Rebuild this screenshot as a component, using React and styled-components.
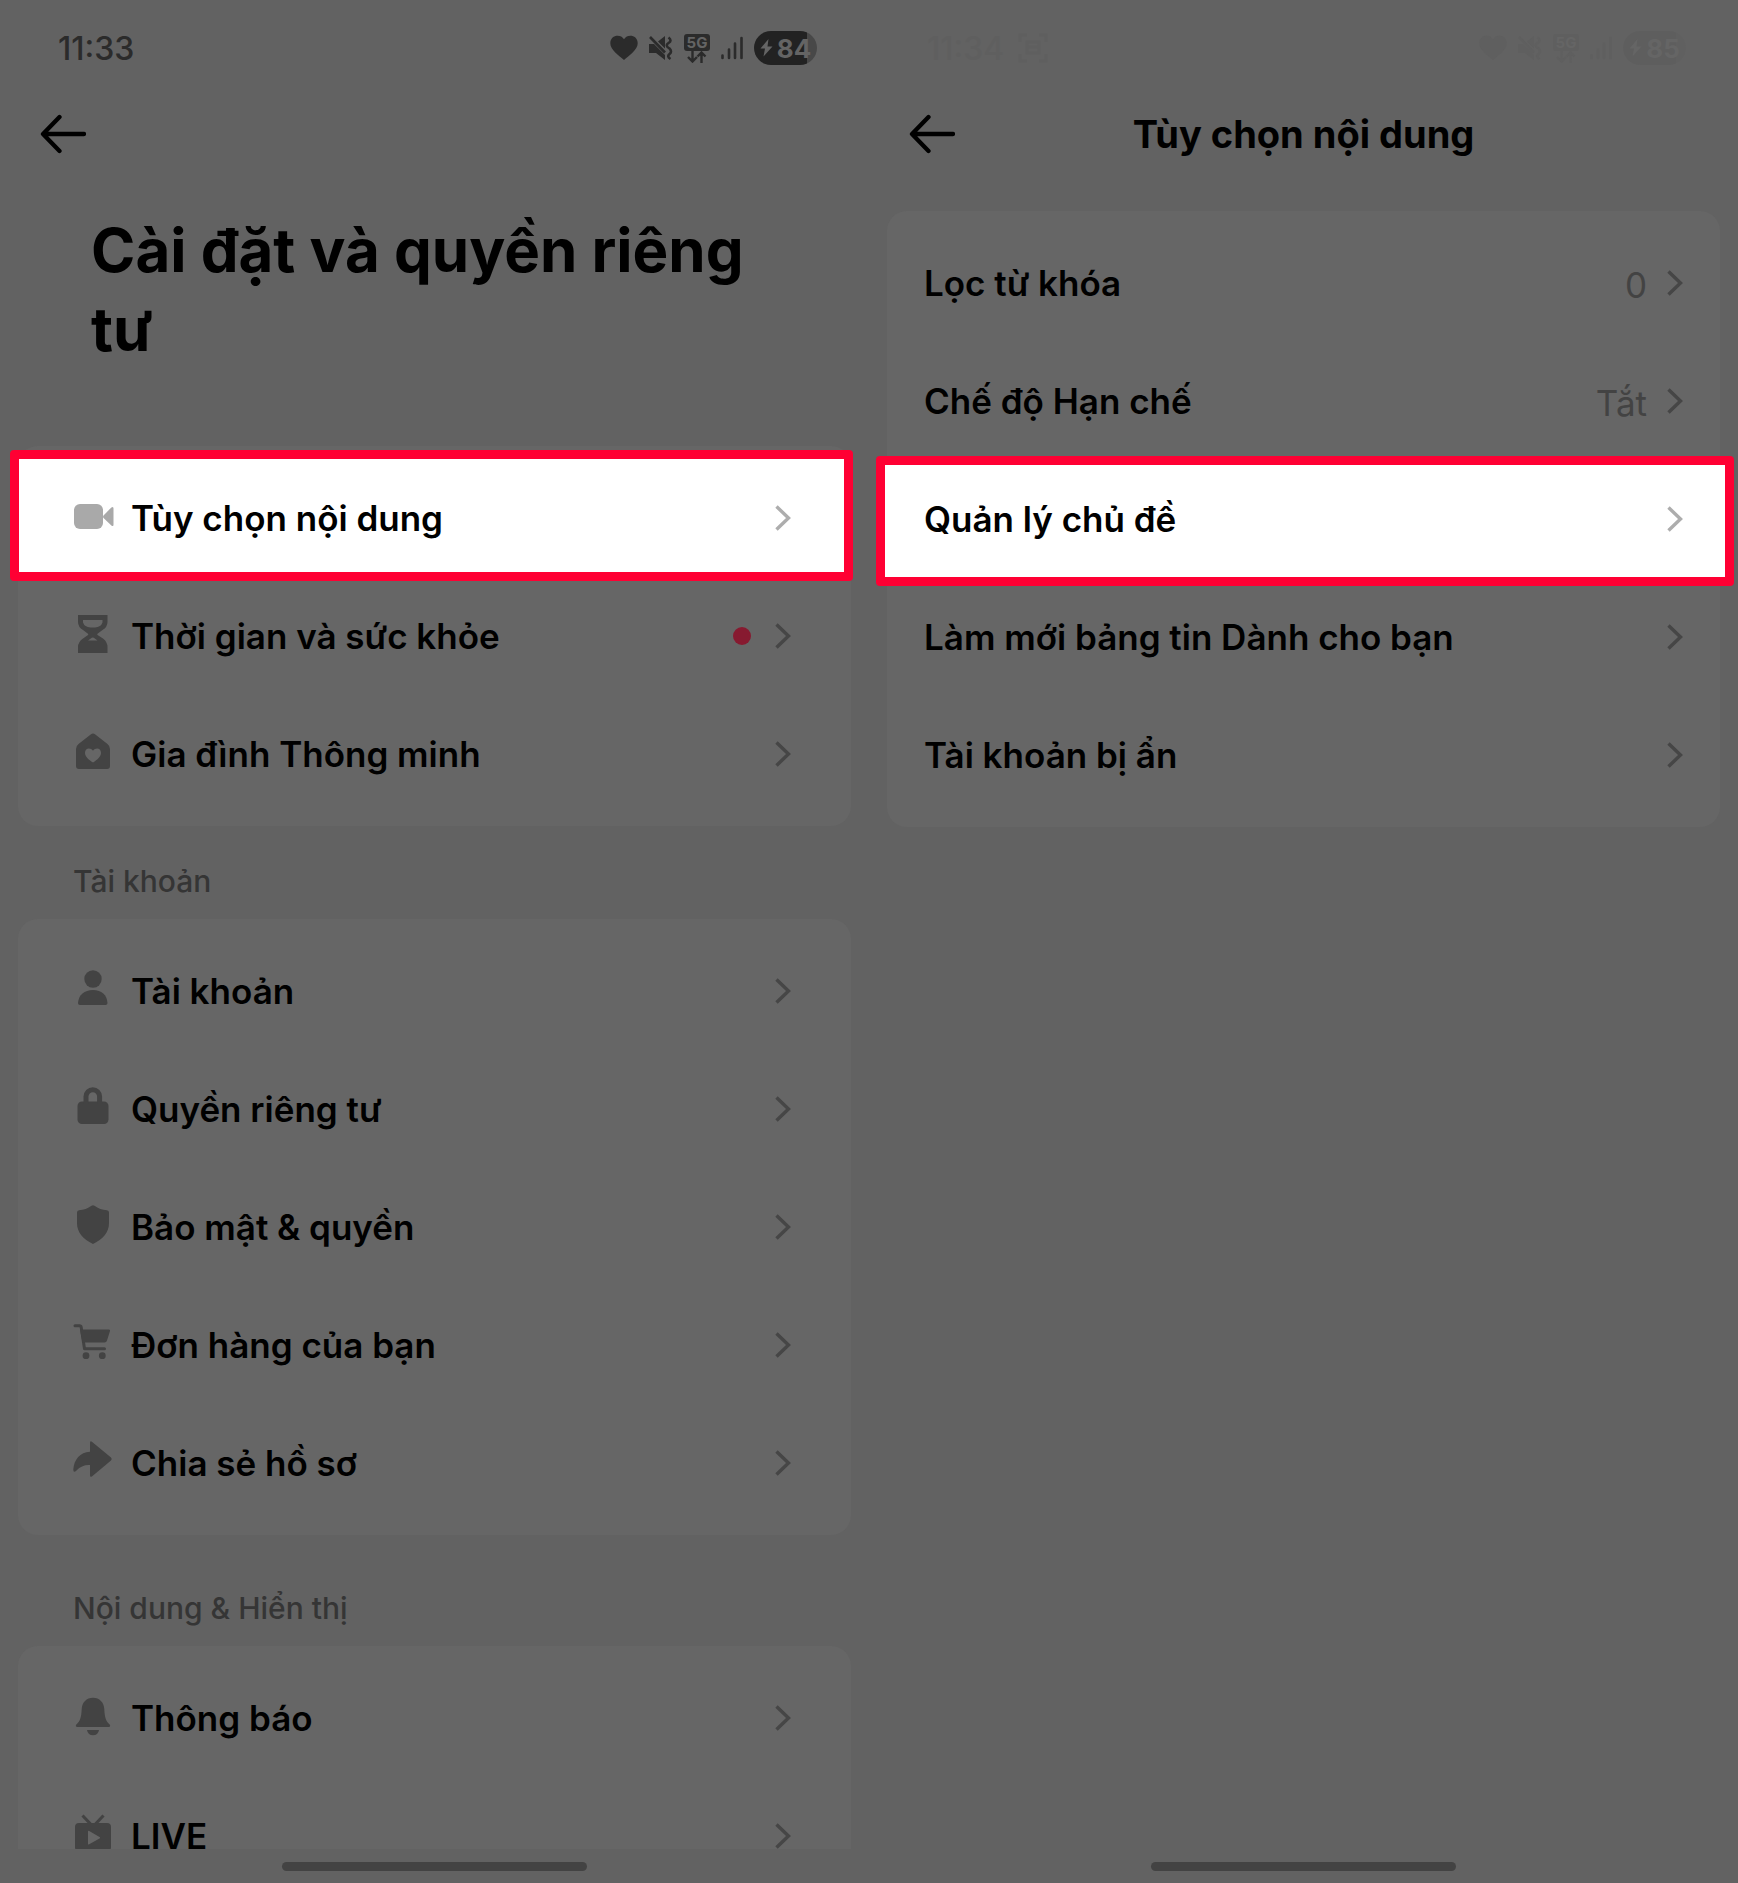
import styled, { createGlobalStyle } from "styled-components";

const accountItems = [
  { icon: "user", label: "Tài khoản" },
  { icon: "lock", label: "Quyền riêng tư" },
  { icon: "shield", label: "Bảo mật & quyền" },
  { icon: "cart", label: "Đơn hàng của bạn" },
  { icon: "share", label: "Chia sẻ hồ sơ" },
];

const generalItems = [
  { icon: "video", label: "Tùy chọn nội dung", frame: "-9px -2px -4px -8px" },
  { icon: "hourglass", label: "Thời gian và sức khỏe", dot: true },
  { icon: "house", label: "Gia đình Thông minh" },
];

const displayItems = [
  { icon: "bell", label: "Thông báo" },
  { icon: "live", label: "LIVE" },
];

const contentItems = [
  { label: "Lọc từ khóa", value: "0" },
  { label: "Chế độ Hạn chế", value: "Tắt" },
  { label: "Quản lý chủ đề", frame: "-4px -14px -8px -11px" },
  { label: "Làm mới bảng tin Dành cho bạn" },
  { label: "Tài khoản bị ẩn" },
];

const icons = {
  video: (
    <>
      <rect x="1" y="8" width="29" height="25" rx="6" />
      <path d="M30.5 19.5 38.4 11.4Q40.5 10 40.5 12.5V28.5Q40.5 31 38.4 29.4L30.5 22Q29.6 20.7 30.5 19.5Z" />
    </>
  ),
  hourglass: (
    <path
      fillRule="evenodd"
      d="M5 1H34.5V8Q34.5 13 29.5 16L24.5 19.7Q24 20.3 24.5 21L30 24.5Q34.5 28 34.5 33V39H5V33Q5 28 10 24.5L15 21Q15.6 20.3 15 19.7L10 16Q5 13 5 8ZM10 6V8.5Q11.5 13 17.5 13.5H22Q28 13 29.5 8.5V6ZM15 26.5H24.5L20.8 23.8Q19.8 23.2 18.8 23.8Z"
    />
  ),
  house: (
    <path
      fillRule="evenodd"
      d="M18 2.3Q20 .7 22 2.3L34.5 12Q37 14 37 17V34Q37 37 34 37H6Q3 37 3 34V17Q3 14 5.500 12ZM20 30.5C15.5 27.5 12 24.5 12 20.7C12 16 17.5 15 20 18.8C22.5 15 28 16 28 20.7C28 24.5 24.5 27.5 20 30.5Z"
    />
  ),
  user: (
    <>
      <circle cx="20" cy="10" r="8.7" />
      <path d="M5 34C5.5 26 11.5 21 20 21S34 26 34.5 34Q34.5 36 32.5 36H7Q5 36 5 34Z" />
    </>
  ),
  lock: (
    <>
      <rect x="4.5" y="14.5" width="31" height="22.5" rx="4.5" />
      <path d="M13 17V9.5a6.8 6.8 0 0 1 13.6 0V17" fill="none" stroke="currentColor" strokeWidth="5" />
    </>
  ),
  shield: (
    <path d="M18.5 .8Q20 -.3 21.5 .8Q27 4.8 34 5.3Q36 5.5 36 7.5V18C36 27.5 30 34 20 39C10 34 4 27.5 4 18V7.5Q4 5.5 6 5.3Q13 4.8 18.5 .8Z" />
  ),
  cart: (
    <>
      <path d="M2 2.800H6.500Q8 2.800 8.200 4.300L11.500 25.700H31.500" fill="none" stroke="currentColor" strokeWidth="3" strokeLinecap="round" strokeLinejoin="round" />
      <path d="M7 6.500H36Q37.500 6.500 37 8L34 17.500Q33.500 19.500 31.500 19.500H9.500Z" />
      <circle cx="13" cy="32.7" r="3.4" />
      <circle cx="29.3" cy="32.7" r="3.4" />
    </>
  ),
  share: (
    <path d="M17 2Q17 -.7 19.2 1L38 16.6Q39.5 18 38 19.5L19.2 35.2Q17 36.8 17 34.3V24Q9 23.5 3.5 29.5Q.3 32.5 .3 28.5C1 18.5 7 11.2 17 10.7Z" />
  ),
  bell: (
    <>
      <path d="M20 1.7C26.5 1.7 31 6.5 31.3 13C31.6 21.5 33 25.5 36.7 28.5Q38 31 35.5 31H4.5Q2 31 3.3 28.5C7 25.5 8.4 21.5 8.7 13C9 6.5 13.5 1.7 20 1.7Z" />
      <path d="M14 34H26Q25 39.3 20 39.3T14 34Z" />
    </>
  ),
  live: (
    <>
      <path d="M9.500 1.500 18.500 11M30.500 1.500 21.500 11" fill="none" stroke="currentColor" strokeWidth="3" />
      <path
        fillRule="evenodd"
        d="M6 9H34Q38 9 38 13V33Q38 37 34 37H6Q2 37 2 33V13Q2 9 6 9ZM15 17.5V29.8Q15 31 16.2 30.3L26.5 24.5Q27.5 23.7 26.5 23L16.2 16.9Q15 16.3 15 17.5Z"
      />
    </>
  ),
};

const StatusIcons = ({ level }) => (
  <StatusGroup>
    <svg width="28" height="26" viewBox="0 0 28 26" fill="currentColor">
      <path d="M14 25C9 20.500 .3 15 .3 8.200C.3 .2 10.500-1.500 14 4.300C17.500-1.500 27.700 .2 27.700 8.200C27.700 15 19 20.500 14 25Z" />
    </svg>
    <svg width="26" height="26" viewBox="0 0 26 26" fill="currentColor">
      <path d="M10 6.500 17 1V13.500ZM1 9H6L17 20V25L8 18H1Z" />
      <path d="M2 2 17 17.500M20.500 2.500q4 3 0 5.500t1 5.500q3 3 0 5.500t1 5" fill="none" stroke="currentColor" strokeWidth="2.6" />
    </svg>
    <Network>
      <NetworkTag>5G</NetworkTag>
      <svg width="20" height="12" viewBox="0 0 20 12" fill="none" stroke="currentColor" strokeWidth="2.4">
        <path d="M5.500 0V10M1 6 5.500 10.500 10 6M14.500 12V2M10.500 5.500 14.500 1.500 18.500 5.500" />
      </svg>
    </Network>
    <svg width="24" height="24" viewBox="0 0 24 24" stroke="currentColor" strokeWidth="2.6" strokeLinecap="round">
      <path d="M2.500 19.500V22M9 13.500V22M15 7.500V22M21.500 2V22" />
    </svg>
    <Battery>
      <svg width="13" height="18" viewBox="0 0 13 18" fill="currentColor">
        <path d="M8.500 0 .5 9.500H5L3.500 17.500 12.500 7.500H7.500Z" />
      </svg>
      {level}
    </Battery>
  </StatusGroup>
);

const BackButton = () => (
  <Back type="button" aria-label="Quay lại">
    <svg width="48" height="40" viewBox="0 0 48 40" fill="none" stroke="currentColor" strokeWidth="4.3" strokeLinecap="round" strokeLinejoin="round">
      <path d="M21.500 3 5 20 21.500 37M6 20H46" />
    </svg>
  </Back>
);

const MenuCard = ({ items, plain }) => (
  <Card>
    {items.map((item) => (
      <li key={item.label}>
        <Row href="#" $plain={plain} $frame={item.frame}>
          {item.icon && (
            <RowIcon viewBox="0 0 40 40" $light={!!item.frame}>
              {icons[item.icon]}
            </RowIcon>
          )}
          <RowLabel>{item.label}</RowLabel>
          {item.value && <RowValue>{item.value}</RowValue>}
          {item.dot && <Dot />}
          <Chevron viewBox="0 0 16 28" $light={!!item.frame}>
            <path d="M1.500 2.500 13.500 14 1.500 25.500" />
          </Chevron>
        </Row>
      </li>
    ))}
  </Card>
);

const App = () => {
  return (
    <>
      <GlobalStyle />
      <Screens>
        <Screen>
          <StatusBar>
            11:33
            <StatusIcons level="84" />
          </StatusBar>
          <Header>
            <BackButton />
          </Header>
          <Content>
            <PageTitle>Cài đặt và quyền riêng tư</PageTitle>
            <MenuCard items={generalItems} />
            <SectionTitle>Tài khoản</SectionTitle>
            <MenuCard items={accountItems} />
            <SectionTitle $spaced>Nội dung & Hiển thị</SectionTitle>
            <MenuCard items={displayItems} />
          </Content>
          <Footer>
            <HomeBar />
          </Footer>
        </Screen>
        <Screen>
          <StatusBar $faint>
            <Clock>
              11:34
              <svg width="30" height="30" viewBox="0 0 30 30" fill="none" stroke="currentColor" strokeWidth="3">
                <path d="M2 9V2H9M21 2H28V9M28 21V28H21M9 28H2V21M9 9H21V20H9ZM9 14H21" />
              </svg>
            </Clock>
            <StatusIcons level="85" />
          </StatusBar>
          <Header>
            <BackButton />
            <HeaderTitle>Tùy chọn nội dung</HeaderTitle>
          </Header>
          <Content>
            <MenuCard items={contentItems} plain />
          </Content>
          <Footer>
            <HomeBar />
          </Footer>
        </Screen>
      </Screens>
    </>
  );
};

export default App;

const GlobalStyle = createGlobalStyle`
  * {
    box-sizing: border-box;
  }
  body {
    margin: 0;
    background: #626262;
    color: #000;
    font-family: Inter, "Liberation Sans", sans-serif;
  }
`;

const Screens = styled.main`
  display: grid;
  grid-template-columns: 1fr 1fr;
`;

const Screen = styled.section`
  display: flex;
  flex-direction: column;
  height: 100vh;
  min-width: 0;
  background: #626262;
`;

const StatusBar = styled.div`
  display: flex;
  align-items: center;
  justify-content: space-between;
  height: 96px;
  flex-shrink: 0;
  padding: 0 52px 0 58px;
  color: ${({ $faint }) => ($faint ? "#5f5f5f" : "#2b2b2b")};
  --battery-fill: ${({ $faint }) => ($faint ? "#5e5e5e" : "#222")};
  --battery-text: ${({ $faint }) => ($faint ? "#656565" : "#646464")};
  --battery-rest: ${({ $faint }) => ($faint ? "#606060" : "#484848")};
  font-size: 32px;
  font-weight: 500;
`;

const Clock = styled.div`
  display: flex;
  align-items: center;
  gap: 14px;
`;

const StatusGroup = styled.div`
  display: flex;
  align-items: center;
  gap: 10px;
`;

const Network = styled.span`
  display: flex;
  flex-direction: column;
  align-items: center;
`;

const NetworkTag = styled.span`
  width: 26px;
  height: 17px;
  border-radius: 3px;
  background: currentColor;
  text-align: center;
  font-size: 15px;
  line-height: 17px;
  font-weight: 700;
  -webkit-text-fill-color: var(--battery-text);
`;

const Battery = styled.span`
  display: flex;
  align-items: center;
  justify-content: center;
  gap: 4px;
  width: 63px;
  height: 34px;
  border-radius: 17px;
  background: linear-gradient(to right, var(--battery-fill) 84%, var(--battery-rest) 84%);
  font-size: 26px;
  font-weight: 700;
  -webkit-text-fill-color: var(--battery-text);

  svg {
    color: var(--battery-text);
  }
`;

const Header = styled.header`
  display: grid;
  grid-template-columns: 80px 1fr 80px;
  align-items: center;
  height: 76px;
  flex-shrink: 0;
  padding: 0 38px;
`;

const Back = styled.button`
  width: 48px;
  height: 40px;
  padding: 0;
  border: none;
  background: transparent;
  color: inherit;
  cursor: pointer;
`;

const HeaderTitle = styled.h2`
  margin: 0;
  text-align: center;
  font-size: 38px;
  line-height: 48px;
  font-weight: 700;
`;

const Content = styled.div`
  flex: 1;
  min-height: 0;
  overflow: hidden;
  padding: 39px 18px 0;
`;

const PageTitle = styled.h1`
  margin: 0 60px 77px 73px;
  font-size: 60px;
  line-height: 79px;
  font-weight: 700;
`;

const SectionTitle = styled.h3`
  margin: 0;
  padding: ${({ $spaced }) => ($spaced ? "53px" : "35px")} 55px 18px;
  color: #353535;
  font-size: 30px;
  line-height: 40px;
  font-weight: 500;
`;

const Card = styled.ul`
  margin: 0;
  padding: 13px 0;
  border-radius: 20px;
  background: #666;
  list-style: none;
`;

const Row = styled.a`
  position: relative;
  z-index: 0;
  display: flex;
  align-items: center;
  height: 118px;
  padding: ${({ $plain }) => ($plain ? "0 37px" : "0 60px 0 55px")};
  color: inherit;
  text-decoration: none;

  &::before {
    content: "";
    display: ${({ $frame }) => ($frame ? "block" : "none")};
    position: absolute;
    z-index: -1;
    inset: ${({ $frame }) => $frame};
    border: 9px solid #ff0033;
    border-radius: 4px;
    background: #fff;
  }
`;

const RowIcon = styled.svg`
  width: 40px;
  height: 40px;
  margin: 0 18px 4px 0;
  overflow: visible;
  color: ${({ $light }) => ($light ? "#a9a9a9" : "#434343")};
  fill: currentColor;
`;

const RowLabel = styled.span`
  flex: 1;
  font-size: 35px;
  line-height: 48px;
  font-weight: 600;
`;

const RowValue = styled.span`
  margin-right: 20px;
  padding-top: 3px;
  color: #434343;
  font-size: 35px;
  line-height: 48px;
`;

const Dot = styled.span`
  width: 18px;
  height: 18px;
  margin-right: 24px;
  border-radius: 50%;
  background: #871a30;
`;

const Chevron = styled.svg`
  width: 16px;
  height: 28px;
  fill: none;
  stroke: ${({ $light }) => ($light ? "#adadad" : "#464646")};
  stroke-width: 3.4;
`;

const Footer = styled.footer`
  display: flex;
  justify-content: center;
  height: 34px;
  flex-shrink: 0;
  padding-top: 13px;
`;

const HomeBar = styled.div`
  width: 35%;
  height: 9px;
  border-radius: 5px;
  background: #434343;
`;
